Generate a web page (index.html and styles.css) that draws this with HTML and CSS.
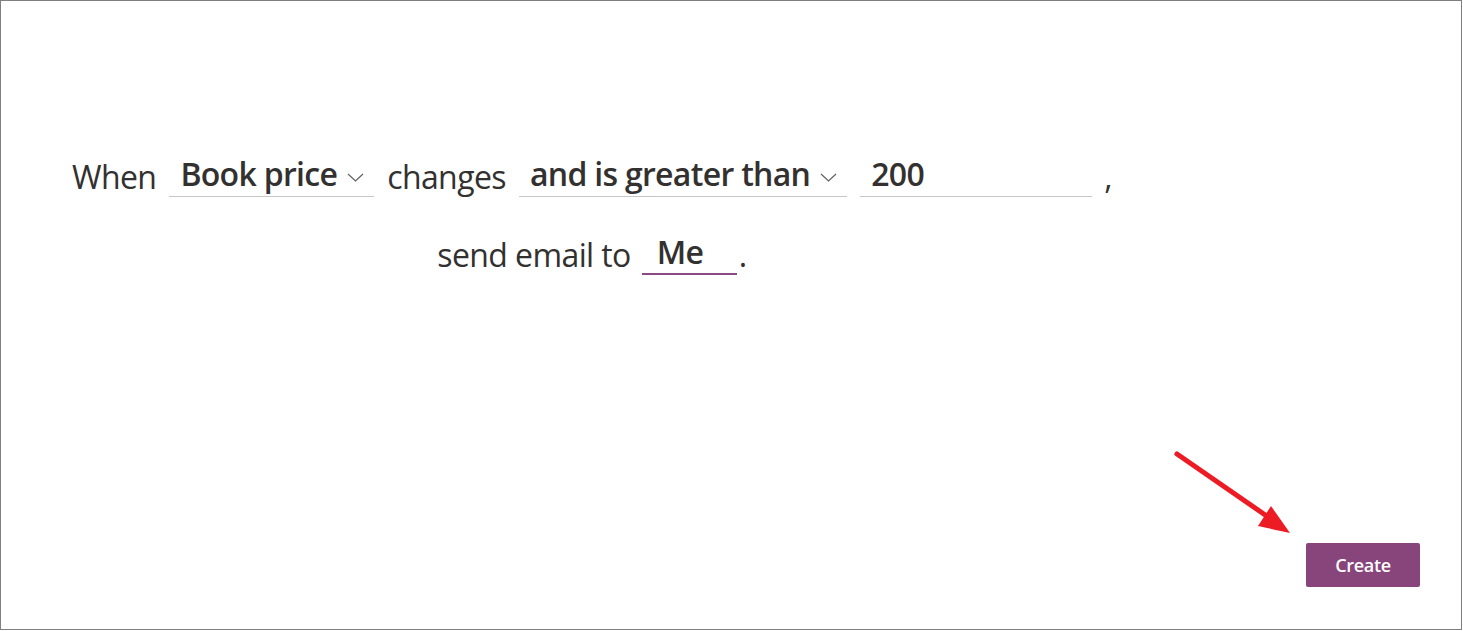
FILE: index.html
```html
<!DOCTYPE html>
<html>
<head>
<meta charset="utf-8">
<link rel="stylesheet" href="styles.css">
</head>
<body>
<div class="frame">
  <div class="sentence">
    <div class="row row-first">
      <span class="word">When</span>
      <div class="field dropdown"><span class="value">Book price</span><svg class="chev" width="17" height="9" viewBox="0 0 17 9"><path d="M1 1 L8.5 8 L16 1" fill="none" stroke="#605e5c" stroke-width="1.1"/></svg></div>
      <span class="word">changes</span>
      <div class="field dropdown"><span class="value">and is greater than</span><svg class="chev" width="17" height="9" viewBox="0 0 17 9"><path d="M1 1 L8.5 8 L16 1" fill="none" stroke="#605e5c" stroke-width="1.1"/></svg></div>
      <div class="field w-num"><span class="value">200</span></div>
      <span class="word comma">,</span>
    </div>
    <div class="row row-second">
      <span class="word">send email to</span>
      <div class="field picker"><span class="value">Me</span></div>
      <span class="word period">.</span>
    </div>
  </div>
  <div class="actions">
    <button class="btn-primary">Create</button>
  </div>
  <svg class="arrow" width="140" height="100" viewBox="0 0 140 100">
    <line x1="6" y1="6" x2="100" y2="71" stroke="#ed1c24" stroke-width="5" stroke-linecap="round"/>
    <polygon points="87,78 100,58 119,85" fill="#ed1c24"/>
  </svg>
</div>
</body>
</html>
```
FILE: styles.css
```css
* { box-sizing: border-box; }
html, body { margin: 0; padding: 0; background: #fff; }
body { font-family: "Open Sans", "Noto Sans", sans-serif; color: #323130; }

.frame {
  position: relative;
  width: 1462px;
  height: 630px;
  border: 1px solid #7f7f7f;
  display: flex;
  flex-direction: column;
}

.sentence {
  display: flex;
  flex-direction: column;
  align-items: center;
  align-self: flex-start;
  margin-left: 71px;
  margin-top: 152px;
}

.row {
  display: flex;
  align-items: flex-end;
  font-size: 32px;
  white-space: nowrap;
}
.row > * { flex-shrink: 0; }
.row-second { margin-top: 34px; }

.word {
  line-height: 40px;
  letter-spacing: -0.6px;
}

.field {
  display: flex;
  align-items: center;
  height: 44px;
  border-bottom: 1px solid #c8c6c4;
  margin: 0 13px;
  padding: 0 10px 2px 11px;
}
.value {
  font-weight: 600;
  letter-spacing: -0.7px;
  line-height: 40px;
}
.dropdown { justify-content: flex-start; }
.chev { margin: 8px 0 0 10px; }
.w-num { width: 232px; margin-left: 0; }
.comma { margin-left: -1px; }

.picker {
  width: 95px;
  margin: 0 2px 0 11px;
  border-bottom: 2px solid #8a4a83;
  padding: 0 0 1px 15px;
}

.actions {
  margin-top: auto;
  display: flex;
  justify-content: flex-end;
  padding: 0 41px 42px 0;
}
.btn-primary {
  width: 114px;
  height: 44px;
  border: none;
  border-radius: 2px;
  background: #88457c;
  color: #fff;
  font-family: "Open Sans", "Noto Sans", sans-serif;
  font-weight: 600;
  font-size: 18px;
  letter-spacing: -0.3px;
}

.arrow {
  position: absolute;
  left: 1170px;
  top: 447px;
}
```
